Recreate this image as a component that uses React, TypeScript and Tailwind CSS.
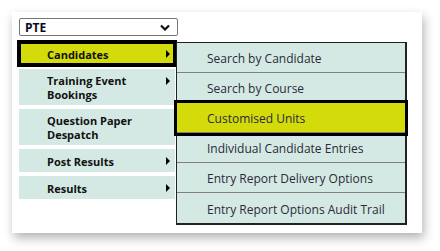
import React from "react";

const left = [
  { label: ["Candidates"], active: true, arrow: true },
  { label: ["Training Event", "Bookings"], arrow: true },
  { label: ["Question Paper", "Despatch"], arrow: false },
  { label: ["Post Results"], arrow: true },
  { label: ["Results"], arrow: true },
];

const sub = [
  "Search by Candidate",
  "Search by Course",
  "Customised Units",
  "Individual Candidate Entries",
  "Entry Report Delivery Options",
  "Entry Report Options Audit Trail",
];

export default function App() {
  return (
    <div className="w-[440px] h-[251px] bg-white p-3" style={{ fontFamily: '"Open Sans", sans-serif' }}>
      <div className="relative w-[410px] h-[221px] bg-white shadow-[2px_5px_10px_rgba(0,0,0,0.3)] pl-[7px] pt-[6px]">
        <div className="flex items-center justify-between w-[159px] h-[18px] border border-[#767676] rounded-[2px] pl-[5px] pr-[7px] bg-white">
          <span className="text-[12px] font-bold text-[#0a0a23] leading-none pt-[1px]">PTE</span>
          <svg width="10" height="7" viewBox="0 0 10 7">
            <path d="M1 1.5 L5 5.5 L9 1.5" fill="none" stroke="#111" strokeWidth="2.2" />
          </svg>
        </div>
        <div className="mt-[6px] flex flex-col gap-1 w-[156px]">
          {left.map((it, i) => (
            <div
              key={i}
              className={
                "relative flex items-center pl-[28px] pt-[2px] " +
                (it.label.length > 1 ? "h-[36px] " : "h-[23px] ") +
                (it.active
                  ? "bg-[#d3db0b] outline-2 outline-black ring-2 ring-inset ring-black"
                  : "bg-[#d4e9e3]")
              }
            >
              <div className="text-[11px] font-bold text-[#111] leading-[14px]">
                {it.label.map((l, j) => (
                  <div key={j}>{l}</div>
                ))}
              </div>
              {it.arrow && (
                <div className="absolute right-[5px] top-[8px] w-0 h-0 border-y-[4px] border-y-transparent border-l-[4px] border-l-black" />
              )}
            </div>
          ))}
        </div>
        <div className="absolute left-[164px] top-[30px] w-[231px] border-t border-l border-r-2 border-b-2 border-[#222] bg-[#d4e9e3]">
          {sub.map((s, i) => (
            <div
              key={i}
              className={
                "h-[30px] flex items-center pl-[30px] pt-[3px] text-[12px] text-[#2a2a3a] " +
                (i < sub.length - 1 ? "border-b border-[#808080] " : "") +
                (i === 2 ? "relative z-10 bg-[#d3db0b] outline-[3px] outline-black" : "")
              }
            >
              {s}
            </div>
          ))}
        </div>
      </div>
    </div>
  );
}
